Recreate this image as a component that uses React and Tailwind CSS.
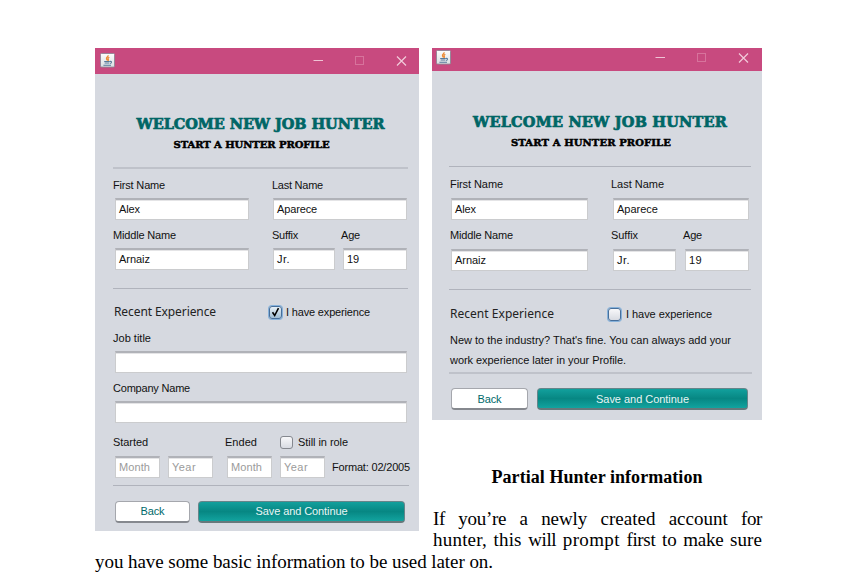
import { useLayoutEffect, useRef, useState } from "react";

const SANS = "font-['Liberation_Sans',Arial,sans-serif]";
const SERIF = "font-['Liberation_Serif','Times_New_Roman',serif]";

// Tracks a single line of text out (or in) to a given width.
function Line({ w, className = "", children }) {
  const ref = useRef(null);
  const [spacing, setSpacing] = useState(0);
  useLayoutEffect(() => {
    const natural = ref.current.getBoundingClientRect().width;
    setSpacing((w - natural) / children.length);
  }, []);
  return (
    <span ref={ref} className={`shrink-0 whitespace-pre ${className}`} style={{ letterSpacing: spacing }}>
      {children}
    </span>
  );
}

function Java() {
  return (
    <svg width="15" height="15" viewBox="0 0 15 15">
      <defs>
        <linearGradient id="tile" x1="0" y1="0" x2="0" y2="1">
          <stop offset="0" stopColor="#fdfdfd" />
          <stop offset="1" stopColor="#d9dfe2" />
        </linearGradient>
      </defs>
      <rect x="0.5" y="0.5" width="14" height="13.6" rx="1" fill="url(#tile)" stroke="#8f8594" strokeWidth="0.9" />
      <path d="M8 2.200c.7 1.500-2.100 2.200-1.500 3.700.2.700.800 1 .900 1.700M9.300 4.200c-1.500.9-1.600 1.500-.9 2.400.3.500 0 .9-.4 1.200" fill="none" stroke="#ec8a34" strokeWidth="1.300" />
      <path d="M4.200 8.500h5.600M4.600 10h4.800M3.400 12.200h7.600M10 8.500c2-.5 2 1.500.1 2" fill="none" stroke="#56799a" strokeWidth="1.100" />
    </svg>
  );
}

function TitleBar({ className }) {
  return (
    <div className={`flex items-start bg-[#c84a7f] ${className}`}>
      <Java />
      <svg className="ml-auto" width="94" height="13" viewBox="0 0 94 13" fill="none">
        <path d="M0.500 5.500h9.500" stroke="#efc3d5" />
        <rect x="42.500" y="1.500" width="8" height="8" stroke="#d7739c" />
        <path d="M84 1.500l9 9M93 1.500l-9 9" stroke="#f1ccdb" strokeWidth="1.200" />
      </svg>
    </div>
  );
}

function Field({ value, hint, w, className }) {
  return (
    <div className={`flex h-[22px] shrink-0 items-center border border-t-2 border-[#cbccce] border-t-[#b0b2b8] bg-white pl-[3px] shadow-[inset_0_1px_0_#e4e4e6] ${hint ? "text-[#9b9b9b]" : "text-[#111]"} ${className}`}>
      {value && <Line w={w}>{value}</Line>}
    </div>
  );
}

function Check({ checked, focused }) {
  return (
    <span
      className={`flex size-[13px] shrink-0 items-center justify-center rounded-[3px] border bg-linear-to-b ${
        focused ? "border-[#476f9b] shadow-[0_0_0_1px_#86b1da]" : "border-[#85888f]"
      } ${checked ? "from-[#e8f0f6] to-[#9fbdd3]" : "from-[#f8f8fa] to-[#d8dbe2]"}`}
    >
      {checked && (
        <svg width="11" height="11" viewBox="0 0 11 11" className="shrink-0">
          <path d="M2.500 5.200l2.200 3.300L8.500 1.200" fill="none" stroke="#000" strokeWidth="1.600" />
        </svg>
      )}
    </span>
  );
}

function Buttons({ className, back, save, saveText }) {
  return (
    <div className={`flex ${className}`}>
      <button className={`flex h-[22px] items-center justify-center rounded-[4px] border border-[#a5a7ad] border-b-2 border-b-[#85888e] bg-white text-[#00696a] ${back}`}>
        <Line w={24}>Back</Line>
      </button>
      <button className={`flex h-[22px] items-center justify-center rounded-[4px] border border-[#65858a] border-b-2 border-b-[#66787b] bg-linear-to-b from-[#12a09d] via-[#078783] to-[#12a39f] text-[#e8f6f5] ${save}`}>
        <Line w={saveText}>Save and Continue</Line>
      </button>
    </div>
  );
}

function Heading({ className, title, sub, subClass }) {
  return (
    <div className={`font-['DejaVu_Serif',serif] font-bold ${className}`}>
      <div className="flex h-5 items-center justify-center text-[14.5px] text-[#006666] [-webkit-text-stroke:0.7px_#006666]">
        <Line w={title}>WELCOME NEW JOB HUNTER</Line>
      </div>
      <div className={`flex items-center justify-center text-[10px] text-black [-webkit-text-stroke:0.5px_#000] ${subClass}`}>
        <Line w={sub}>START A HUNTER PROFILE</Line>
      </div>
    </div>
  );
}

const RULE = "h-px bg-[#b0b3bc]";
const ROW = "flex h-5 items-center";
const RECENT = "pl-px font-['Noto_Sans','Open_Sans',sans-serif] text-[12px] text-[#222]";

function FullProfile() {
  return (
    <section className={`h-[483px] w-[324px] shrink-0 bg-[#d6d9e0] text-[11px] text-[#111] ${SANS}`}>
      <TitleBar className="h-[26px] pt-[5px] pl-[5px] pr-[12px] [&>svg:last-child]:mt-[2px]" />
      <Heading className="pt-10 pl-[7px]" title={248} sub={156} subClass="h-5 pt-px pr-[18px]" />
      <div className="pl-[18px]">
        <div className="mt-[13px] h-[2px] w-[295px] bg-[#bfc2ca]" />
        <div className={`${ROW} mt-[6px]`}>
          <div className="w-[159px]"><Line w={52}>First Name</Line></div>
          <Line w={51}>Last Name</Line>
        </div>
        <div className="mt-[3px] ml-[2px] flex gap-[24px]">
          <Field value="Alex" w={21} className="w-[134px]" />
          <Field value="Aparece" w={40} className="w-[134px]" />
        </div>
        <div className={`${ROW} mt-[5px]`}>
          <div className="w-[159px]"><Line w={63}>Middle Name</Line></div>
          <div className="w-[69px]"><Line w={26}>Suffix</Line></div>
          <Line w={19}>Age</Line>
        </div>
        <div className="mt-[3px] ml-[2px] flex">
          <Field value="Arnaiz" w={31} className="mr-[24px] w-[134px]" />
          <Field value="Jr." w={13} className="mr-[8px] w-[62px]" />
          <Field value="19" w={12} className="w-[64px]" />
        </div>
        <div className={`${RULE} mt-[18px] w-[295px]`} />
        <div className={`${ROW} mt-[13px]`}>
          <div className={`w-[156px] ${RECENT}`}><Line w={102}>Recent Experience</Line></div>
          <Check checked focused />
          <Line w={84} className="ml-[4px]">I have experience</Line>
        </div>
        <div className={`${ROW} mt-[6px]`}><Line w={38}>Job title</Line></div>
        <Field className="mt-[3px] ml-[2px] w-[292px]" />
        <div className={`${ROW} mt-[5px]`}><Line w={77}>Company Name</Line></div>
        <Field className="mt-[3px] ml-[2px] w-[292px]" />
        <div className={`${ROW} mt-[9px]`}>
          <div className="w-[112px]"><Line w={35}>Started</Line></div>
          <div className="w-[55px]"><Line w={32}>Ended</Line></div>
          <Check />
          <Line w={50} className="ml-[5px]">Still in role</Line>
        </div>
        <div className="mt-[4px] ml-[2px] flex items-center">
          <Field value="Month" w={31} hint className="mr-[8px] w-[45px]" />
          <Field value="Year" w={24} hint className="mr-[14px] w-[45px]" />
          <Field value="Month" w={31} hint className="mr-[8px] w-[45px]" />
          <Field value="Year" w={24} hint className="mr-[7px] w-[45px]" />
          <Line w={78}>Format: 02/2005</Line>
        </div>
        <div className={`${RULE} mt-[7px] w-[296px]`} />
        <Buttons className="mt-[15px] ml-[2px] gap-[8px]" back="w-[75px]" save="w-[207px]" saveText={92} />
      </div>
    </section>
  );
}

function PartialProfile() {
  return (
    <section className={`h-[372px] w-[330px] bg-[#d6d9e0] text-[11px] text-[#111] ${SANS}`}>
      <TitleBar className="h-[23px] pt-[2px] pl-[4px] pr-[13px] [&>svg:last-child]:mt-[2px]" />
      <Heading className="pt-[41px] pl-[6px]" title={254} sub={160} subClass="h-5 pt-px pr-[18px]" />
      <div className="pl-[17px]">
        <div className={`${RULE} mt-[14px] w-[302px]`} />
        <div className={`${ROW} mt-[7px]`}>
          <div className="w-[162px] pl-px"><Line w={53}>First Name</Line></div>
          <Line w={53}>Last Name</Line>
        </div>
        <div className="mt-[4px] ml-[2px] flex gap-[25px]">
          <Field value="Alex" w={21} className="w-[137px]" />
          <Field value="Aparece" w={41} className="w-[136px]" />
        </div>
        <div className={`${ROW} mt-[5px]`}>
          <div className="w-[162px] pl-px"><Line w={63}>Middle Name</Line></div>
          <div className="w-[72px]"><Line w={27}>Suffix</Line></div>
          <Line w={19}>Age</Line>
        </div>
        <div className="mt-[4px] ml-[2px] flex">
          <Field value="Arnaiz" w={31} className="mr-[25px] w-[137px]" />
          <Field value="Jr." w={13} className="mr-[9px] w-[63px]" />
          <Field value="19" w={13} className="w-[64px]" />
        </div>
        <div className={`${RULE} mt-[18px] w-[302px]`} />
        <div className={`${ROW} mt-[14px]`}>
          <div className={`w-[159px] ${RECENT}`}><Line w={104}>Recent Experience</Line></div>
          <Check focused />
          <Line w={86} className="ml-[5px]">I have experience</Line>
        </div>
        <div className={`${ROW} mt-[6px] pl-px`}><Line w={281}>New to the industry? That's fine. You can always add your</Line></div>
        <div className={`${ROW} pl-px`}><Line w={176}>work experience later in your Profile.</Line></div>
        <div className="mt-[2px] h-[2px] w-[303px] bg-[#bfc2ca]" />
        <Buttons className="mt-[14px] ml-[2px] gap-[9px] [&>button]:pt-px" back="w-[77px]" save="w-[211px]" saveText={93} />
      </div>
    </section>
  );
}

export default function App() {
  return (
    <main className={`h-[579px] overflow-hidden bg-white pt-12 pl-[95px] text-[19px] text-black ${SERIF}`}>
      <div className="flex h-[503px] gap-[13px]">
        <FullProfile />
        <div className="w-[330px]">
          <PartialProfile />
          <h2 className="mt-[46px] flex h-[22px] items-center justify-center text-[18px] font-bold">
            <Line w={211}>Partial Hunter information</Line>
          </h2>
          <p className="mt-[20px] ml-px flex h-[22px] items-center justify-between">
            <Line w={12}>If</Line>
            <Line w={48}>you’re</Line>
            <span>a</span>
            <Line w={46}>newly</Line>
            <Line w={55}>created</Line>
            <Line w={59}>account</Line>
            <Line w={21}>for</Line>
          </p>
          <p className="ml-px flex h-[21px] items-center justify-between">
            <Line w={54}>hunter,</Line>
            <Line w={28}>this</Line>
            <Line w={28}>will</Line>
            <Line w={57}>prompt</Line>
            <Line w={29}>first</Line>
            <span>to</span>
            <Line w={40}>make</Line>
            <Line w={32}>sure</Line>
          </p>
        </div>
      </div>
      <p className="flex h-[22px] items-center">
        <Line w={398}>you have some basic information to be used later on.</Line>
      </p>
    </main>
  );
}
